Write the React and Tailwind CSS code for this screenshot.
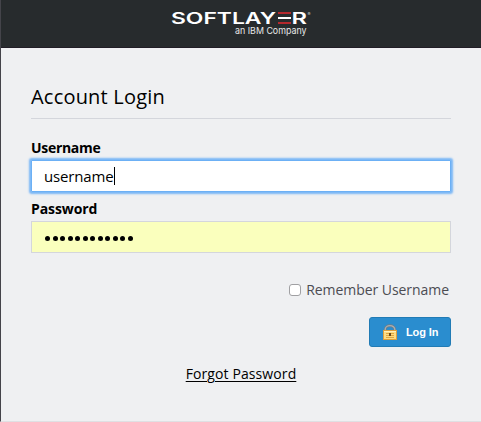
import React from "react";

function Logo() {
  return (
    <svg width="142" height="30" viewBox="0 0 142 30" className="block overflow-visible font-['Inter',sans-serif]">
      <text x="0" y="12" fontSize="15.8" fontWeight="600" fill="#fff" textLength="105" lengthAdjust="spacingAndGlyphs">SOFTLAY</text>
      <path d="M107 0h13v2h-13zM107 10h13v2h-13z" fill="#b3282d" />
      <path d="M107 5h13v2h-13z" fill="#fff" />
      <text x="120.5" y="12" fontSize="15.8" fontWeight="600" fill="#fff" textLength="15.5" lengthAdjust="spacingAndGlyphs">R</text>
      <text x="136.5" y="4" fontSize="4.5" fill="#ccc">®</text>
      <text x="64" y="22" fontSize="9.5" fill="#e8e8e8" textLength="71.5" lengthAdjust="spacingAndGlyphs">an IBM Company</text>
    </svg>
  );
}

function Lock() {
  return (
    <svg width="16" height="17" viewBox="0 0 16 17" className="block">
      <path d="M3.2 7.5V5.6a4.8 4 0 0 1 9.6 0V7.5" fill="none" stroke="#6f7d87" strokeWidth="2.6" />
      <path d="M3.2 7.5V5.6a4.8 4 0 0 1 9.6 0V7.5" fill="none" stroke="#a9adb0" strokeWidth="1.4" />
      <rect x="1.5" y="6.5" width="13" height="9" fill="#fbdc84" stroke="#dda03b" />
      <path d="M2 7.5h12" stroke="#fff0b8" />
      <path d="M4 9.5h3M4 11.5h3M9 9.5h3M9 11.5h3M4 13.5h8" stroke="#e0a83f" />
      <path d="M7 9h2v3H7z" fill="#6b4a1e" />
    </svg>
  );
}

export default function App() {
  return (
    <div className="flex h-[422px] w-[481px] flex-col overflow-hidden border-b border-l border-b-[#dfe0e3] border-l-[#44444a] bg-[#eff0f2] font-['Open_Sans',sans-serif] text-black">
      <header className="h-12 shrink-0 border-b border-[#211d26] bg-[#272b2d] pl-[170px] pt-3">
        <Logo />
      </header>
      <main className="flex flex-col pl-[30px] pr-[30px]">
        <h1 className="mt-[35px] h-9 border-b border-[#d4d6dc] text-[20px] leading-7 tracking-[0.2px]">Account Login</h1>
        <label className="mt-[19px] h-[22px] text-[14px] font-bold leading-5 tracking-[-0.3px]">Username</label>
        <div className="flex h-8 items-center rounded-[1px] border border-[#6cb0f5] bg-white pl-3 text-[15px] tracking-[-0.15px] shadow-[0_0_2px_2px_#7ab7f6]">
          <span>username</span>
          <span className="h-[18px] w-px bg-black" />
        </div>
        <label className="mt-[7px] h-[22px] text-[14px] font-bold leading-5 tracking-[-0.1px]">Password</label>
        <div className="flex h-8 items-center gap-[2.5px] border border-[#d4d6dc] bg-[#faffbd] pl-[13px] pt-[3px]">
          {Array.from({ length: 12 }, (_, i) => (
            <span key={i} className="size-[5px] rounded-full bg-black" />
          ))}
        </div>
        <div className="mt-[26px] flex h-5 items-center justify-end gap-[5px] pr-[2px] text-[14px] tracking-[-0.05px] text-[#4c4c52]">
          <span className="mt-px size-3 rounded-[3px] border border-[#a0a0a3] bg-white" />
          <span>Remember Username</span>
        </div>
        <button className="mt-[18px] flex h-[30px] w-[82px] items-center self-end rounded-[3px] border border-[#217bb5] bg-[#2a8dcf] pl-3 text-white">
          <Lock />
          <span className="ml-[8px] font-['Liberation_Sans',sans-serif] text-[11px] font-bold tracking-[-0.1px]">Log In</span>
        </button>
        <a className="mt-[17px] self-center text-[14px] leading-5 tracking-[0.1px] underline underline-offset-2">Forgot Password</a>
      </main>
    </div>
  );
}
